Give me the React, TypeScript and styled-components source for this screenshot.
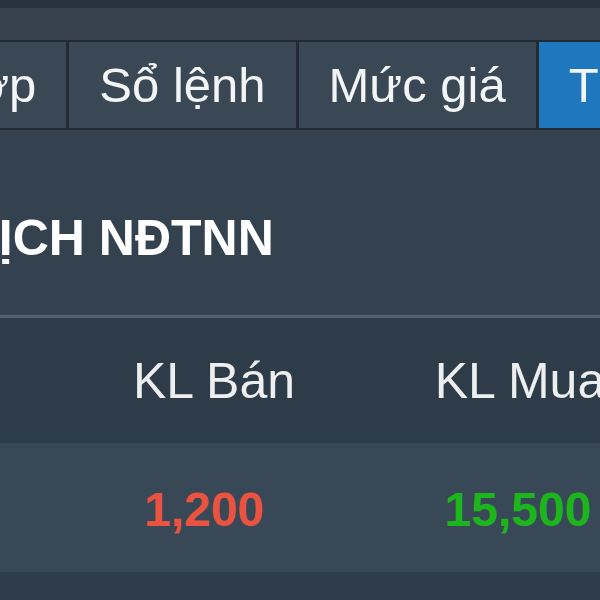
import styled, { createGlobalStyle } from 'styled-components'

type Tab = { label: string; active?: boolean }

const tabs: Tab[] = [
  { label: 'Khớp' },
  { label: 'Sổ lệnh' },
  { label: 'Mức giá' },
  { label: 'Thống kê', active: true }
]

type Column = { label: string; shift?: number }

const columns: Column[] = [{ label: '' }, { label: 'KL Bán', shift: 8 }, { label: 'KL Mua' }]

type Cell = { value: string; tone?: 'down' | 'up'; shift?: number }

const row: Cell[] = [
  { value: '' },
  { value: '1,200', tone: 'down', shift: 12 },
  { value: '15,500', tone: 'up', shift: 4 }
]

const GlobalStyle = createGlobalStyle`
  html, body {
    margin: 0;
    padding: 0;
    background: #2f3c4a;
  }
`

export default function App() {
  return (
    <>
      <GlobalStyle />
      <Viewport>
        <Board>
          <TopStrip />
          <Band />
          <TabBar>
            {tabs.map(tab => (
              <TabItem key={tab.label} active={tab.active}>
                {tab.label}
              </TabItem>
            ))}
          </TabBar>

          <TitleArea>
            <Title>GIAO DỊCH NĐTNN</Title>
          </TitleArea>
          <Divider />

          <HeaderRow>
            {columns.map((col, i) => (
              <HeadCell key={i} shift={col.shift}>
                {col.label}
              </HeadCell>
            ))}
          </HeaderRow>

          <DataRow>
            {row.map((cell, i) => (
              <DataCell key={i} tone={cell.tone} shift={cell.shift}>
                {cell.value}
              </DataCell>
            ))}
          </DataRow>

          <Footer />
        </Board>
      </Viewport>
    </>
  )
}

const Viewport = styled.div`
  width: 600px;
  height: 600px;
  overflow: hidden;
  background: #2f3c4a;
  font-family: 'Liberation Sans', Arial, sans-serif;
`

const Board = styled.div`
  margin-left: -180px;
  width: 900px;
  display: flex;
  flex-direction: column;
`

const TopStrip = styled.div`
  height: 8px;
  background: #28323c;
`

const Band = styled.div`
  height: 32px;
  background: #37424e;
`

const TabBar = styled.div`
  display: flex;
  height: 86px;
  padding-left: 67px;
  background: #3a4653;
  border-top: 2px solid #222b34;
  border-bottom: 2px solid #222b34;
`

const TabItem = styled.div<{ active?: boolean }>`
  display: flex;
  align-items: center;
  padding: 0 30px;
  border-right: 3px solid #222b34;
  font-size: 49px;
  color: #f2f4f6;
  white-space: nowrap;
  background: ${({ active }) => (active ? '#1f77bd' : '#3a4754')};
`

const TitleArea = styled.div`
  height: 185px;
  padding: 83px 0 0 1px;
  box-sizing: border-box;
  background: #344250;
`

const Title = styled.div`
  font-size: 50px;
  line-height: 50px;
  font-weight: bold;
  color: #ffffff;
  white-space: nowrap;
`

const Divider = styled.div`
  height: 3px;
  background: #55616d;
`

const HeaderRow = styled.div`
  display: grid;
  grid-template-columns: 235px 310px 310px;
  height: 125px;
  background: #2e3b48;
`

const HeadCell = styled.div<{ shift?: number }>`
  display: flex;
  align-items: center;
  justify-content: center;
  padding-left: ${({ shift = 0 }) => shift}px;
  font-size: 50px;
  color: #eceef0;
  white-space: nowrap;
`

const DataRow = styled.div`
  display: grid;
  grid-template-columns: 235px 310px 310px;
  height: 129px;
  background: #394856;
`

const DataCell = styled.div<{ tone?: 'down' | 'up'; shift?: number }>`
  display: flex;
  align-items: center;
  justify-content: center;
  padding-top: 4px;
  padding-right: ${({ shift = 0 }) => shift}px;
  font-size: 48px;
  font-weight: bold;
  white-space: nowrap;
  color: ${({ tone }) => (tone === 'down' ? '#ea5340' : tone === 'up' ? '#1cb51c' : '#ffffff')};
`

const Footer = styled.div`
  height: 28px;
  background: #2f3c4a;
`
